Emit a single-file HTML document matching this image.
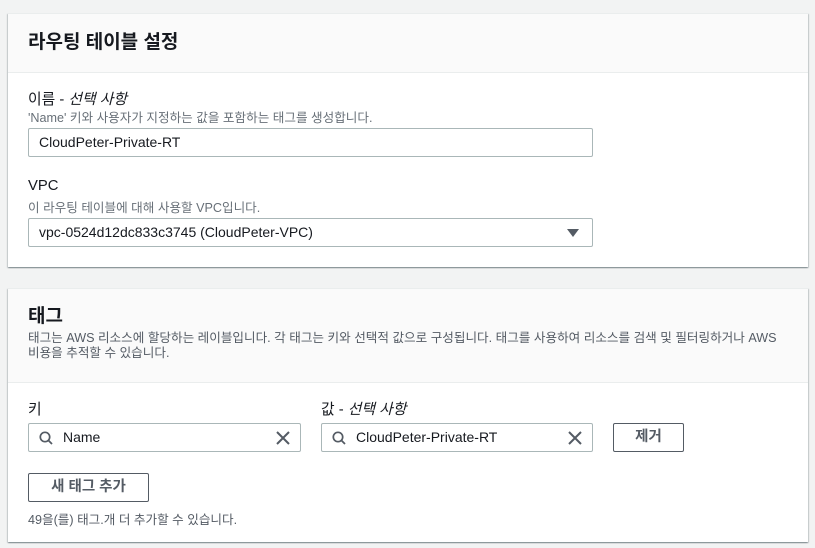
<!DOCTYPE html>
<html><head><meta charset="utf-8"><style>
*{box-sizing:border-box;margin:0;padding:0}
body{width:815px;height:548px;background:#f2f3f3;font-family:"Liberation Sans","Noto Sans CJK KR",sans-serif;color:#16191f;position:relative;overflow:hidden}
.card{position:absolute;left:8px;width:800px;background:#fff;box-shadow:0 1px 1px 0 rgba(0,28,36,.3),1px 1px 1px 0 rgba(0,28,36,.15),-1px 1px 1px 0 rgba(0,28,36,.15);border-top:1px solid #eaeded}
.hd{background:#fafafa;border-bottom:1px solid #eaeded;padding:0 20px}
.abs{position:absolute}
.lbl{font-size:14.8px;color:#16191f}
.desc{font-size:12.6px;color:#687078}
.inp{position:absolute;height:29px;border:1px solid #aab7b8;border-radius:2px;background:#fff;font-size:14px;line-height:27px;padding-left:10px;color:#16191f}
.btn{position:absolute;height:29px;border:1px solid #545b64;border-radius:2px;background:#fff;font-size:14.5px;font-weight:bold;color:#545b64;text-align:center;line-height:27px}
i{font-style:italic}
</style></head><body>
<div class="card" style="top:13px;height:254px">
 <div class="hd" style="height:59px"><div style="font-size:19px;font-weight:bold;line-height:57px">라우팅 테이블 설정</div></div>
 <div class="abs lbl" style="left:20px;top:74px">이름 - <i>선택 사항</i></div>
 <div class="abs desc" style="left:20px;top:93px">'Name' 키와 사용자가 지정하는 값을 포함하는 태그를 생성합니다.</div>
 <div class="inp" style="left:20px;top:114px;width:565px">CloudPeter-Private-RT</div>
 <div class="abs lbl" style="left:20px;top:164px">VPC</div>
 <div class="abs desc" style="left:20px;top:183px">이 라우팅 테이블에 대해 사용할 VPC입니다.</div>
 <div class="inp" style="left:20px;top:204px;width:565px">vpc-0524d12dc833c3745 (CloudPeter-VPC)
  <svg style="position:absolute;right:13px;top:10px" width="12" height="8"><path d="M0 0H12L6 8Z" fill="#545b64"/></svg></div>
</div>
<div class="card" style="top:288px;height:254px">
 <div class="hd" style="height:94px"><div style="font-size:19px;font-weight:bold;padding-top:12px">태그</div>
 <div class="desc" style="margin-top:3px;line-height:15px;color:#545b64">태그는 AWS 리소스에 할당하는 레이블입니다. 각 태그는 키와 선택적 값으로 구성됩니다. 태그를 사용하여 리소스를 검색 및 필터링하거나 AWS<br>비용을 추적할 수 있습니다.</div></div>
 <div class="abs lbl" style="left:20px;top:109px">키</div>
 <div class="abs lbl" style="left:313px;top:109px">값 - <i>선택 사항</i></div>
 <div class="inp" style="left:20px;top:134px;width:273px;padding-left:34px">Name
  <svg style="position:absolute;left:10px;top:7px" width="14" height="14"><circle cx="6" cy="6" r="4.7" fill="none" stroke="#545b64" stroke-width="1.7"/><path d="M9.5 9.5L13 13" stroke="#545b64" stroke-width="1.8"/></svg>
  <svg style="position:absolute;right:10px;top:7px" width="14" height="14"><path d="M1 1L13 13M13 1L1 13" stroke="#545b64" stroke-width="2"/></svg></div>
 <div class="inp" style="left:313px;top:134px;width:272px;padding-left:34px">CloudPeter-Private-RT
  <svg style="position:absolute;left:10px;top:7px" width="14" height="14"><circle cx="6" cy="6" r="4.7" fill="none" stroke="#545b64" stroke-width="1.7"/><path d="M9.5 9.5L13 13" stroke="#545b64" stroke-width="1.8"/></svg>
  <svg style="position:absolute;right:10px;top:7px" width="14" height="14"><path d="M1 1L13 13M13 1L1 13" stroke="#545b64" stroke-width="2"/></svg></div>
 <div class="btn" style="left:605px;top:134px;width:71px">제거</div>
 <div class="btn" style="left:20px;top:184px;width:121px">새 태그 추가</div>
 <div class="abs desc" style="left:20px;top:220px;color:#545b64">49을(를) 태그.개 더 추가할 수 있습니다.</div>
</div>
</body></html>
